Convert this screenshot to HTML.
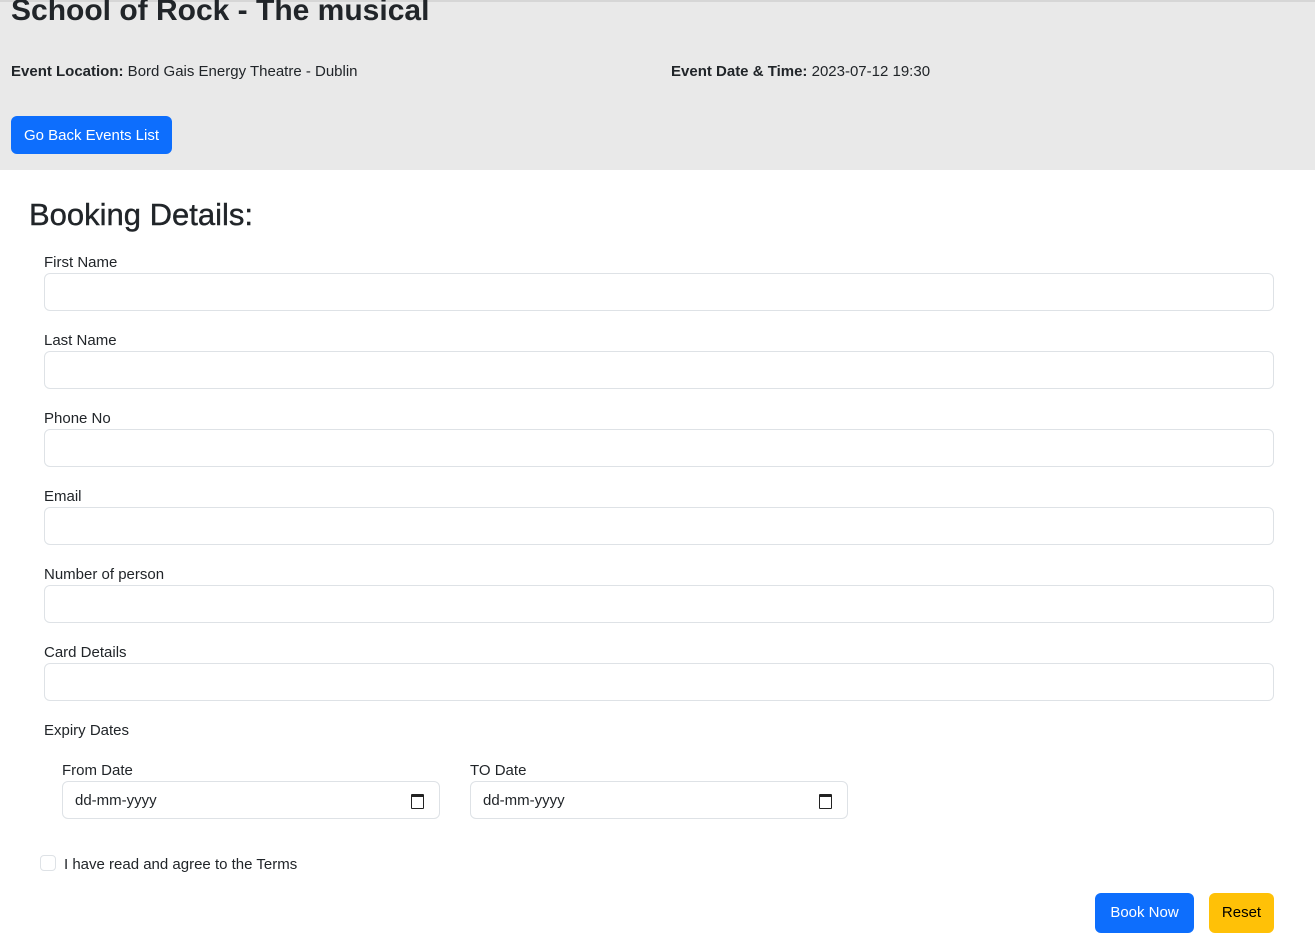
<!DOCTYPE html>
<html><head><style>
body{margin:0;width:1315px;height:927px;overflow:hidden;background:#fff;font-family:"Liberation Sans",sans-serif;color:#212529;position:relative}
.a{position:absolute;white-space:nowrap}
.hdr{position:absolute;left:0;top:0;width:1315px;height:170px;background:#e9e9e9;border-top:2px solid #d6d6d6;box-sizing:border-box}
.lbl{position:absolute;left:44px;font-size:15px}
.inp{position:absolute;left:44px;width:1230px;height:38px;border:1px solid #dee2e6;border-radius:6px;box-sizing:border-box;background:#fff}
.date{position:absolute;width:378px;height:38px;border:1px solid #dee2e6;border-radius:6px;box-sizing:border-box;font-size:15px;padding:10px 12px}
.cal{position:absolute;right:15px;top:12px;width:11px;height:11px;border:1.5px solid #222;border-top-width:3px;border-radius:1px}
.btn{position:absolute;border-radius:6px;font-size:15px;text-align:center;line-height:40px}
</style></head><body>
<div class="hdr"></div>
<div class="a" style="left:11px;top:-6px;font-size:30px;font-weight:bold">School of Rock - The musical</div>
<div class="a" style="left:11px;top:63px;font-size:15px"><b>Event Location:</b> Bord Gais Energy Theatre - Dublin</div>
<div class="a" style="left:671px;top:63px;font-size:15px"><b>Event Date &amp; Time:</b> 2023-07-12 19:30</div>
<div class="btn" style="left:11px;top:116px;width:161px;height:38px;background:#0d6efd;color:#fff">Go Back Events List</div>
<div class="a" style="left:29px;top:197px;font-size:31px;-webkit-text-stroke:0.4px #212529">Booking Details:</div>
<div class="lbl" style="top:254px">First Name</div><div class="inp" style="top:273px"></div>
<div class="lbl" style="top:332px">Last Name</div><div class="inp" style="top:351px"></div>
<div class="lbl" style="top:410px">Phone No</div><div class="inp" style="top:429px"></div>
<div class="lbl" style="top:488px">Email</div><div class="inp" style="top:507px"></div>
<div class="lbl" style="top:566px">Number of person</div><div class="inp" style="top:585px"></div>
<div class="lbl" style="top:644px">Card Details</div><div class="inp" style="top:663px"></div>
<div class="lbl" style="top:722px">Expiry Dates</div>
<div class="lbl" style="left:62px;top:762px">From Date</div>
<div class="date" style="left:62px;top:781px">dd-mm-yyyy<div class="cal"></div></div>
<div class="lbl" style="left:470px;top:762px">TO Date</div>
<div class="date" style="left:470px;top:781px">dd-mm-yyyy<div class="cal"></div></div>
<div class="a" style="left:40px;top:855px;width:16px;height:16px;border:1px solid #dee2e6;border-radius:4px;box-sizing:border-box"></div>
<div class="a" style="left:64px;top:856px;font-size:15px">I have read and agree to the Terms</div>
<div class="btn" style="left:1095px;top:893px;width:99px;height:40px;background:#0d6efd;color:#fff">Book Now</div>
<div class="btn" style="left:1209px;top:893px;width:65px;height:40px;background:#ffc107;color:#000">Reset</div>
</body></html>
